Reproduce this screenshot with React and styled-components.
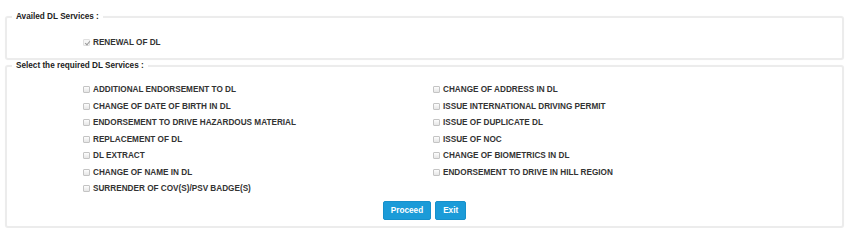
import React from "react";
import styled, { createGlobalStyle } from "styled-components";

const leftServices = [
  "ADDITIONAL ENDORSEMENT TO DL",
  "CHANGE OF DATE OF BIRTH IN DL",
  "ENDORSEMENT TO DRIVE HAZARDOUS MATERIAL",
  "REPLACEMENT OF DL",
  "DL EXTRACT",
  "CHANGE OF NAME IN DL",
  "SURRENDER OF COV(S)/PSV BADGE(S)",
];

const rightServices = [
  "CHANGE OF ADDRESS IN DL",
  "ISSUE INTERNATIONAL DRIVING PERMIT",
  "ISSUE OF DUPLICATE DL",
  "ISSUE OF NOC",
  "CHANGE OF BIOMETRICS IN DL",
  "ENDORSEMENT TO DRIVE IN HILL REGION",
];

export default function App() {
  return (
    <>
      <GlobalStyle />
      <StyledPage>
        <StyledFieldset $top={11}>
          <StyledLegend>Availed DL Services :</StyledLegend>
          <StyledAvailed>
            <ServiceItem label="RENEWAL OF DL" checked disabled />
          </StyledAvailed>
        </StyledFieldset>
        <StyledFieldset $top={0}>
          <StyledLegend>Select the required DL Services :</StyledLegend>
          <StyledGrid>
            <StyledColumn>
              {leftServices.map((service) => (
                <ServiceItem key={service} label={service} />
              ))}
            </StyledColumn>
            <StyledColumn>
              {rightServices.map((service) => (
                <ServiceItem key={service} label={service} />
              ))}
            </StyledColumn>
          </StyledGrid>
          <StyledActions>
            <StyledButton type="button">Proceed</StyledButton>
            <StyledButton type="button">Exit</StyledButton>
          </StyledActions>
        </StyledFieldset>
      </StyledPage>
    </>
  );
}

function ServiceItem({ label, checked, disabled }) {
  return (
    <StyledItem>
      <StyledCheckbox
        type="checkbox"
        defaultChecked={checked}
        disabled={disabled}
      />
      <span>{label}</span>
    </StyledItem>
  );
}

const GlobalStyle = createGlobalStyle`
  body {
    margin: 0;
    background: #fff;
    font-family: "Liberation Sans", Arial, sans-serif;
    color: #333;
  }
`;

const StyledPage = styled.div`
  padding: 0 6px 0 5px;
`;

const StyledFieldset = styled.fieldset`
  margin: ${(props) => props.$top}px 0 0;
  padding: 0;
  border: 2px solid #ececec;
  border-radius: 3px;
  box-shadow: 0 0 1px rgba(0, 0, 0, 0.06);
  min-width: 0;
`;

const StyledLegend = styled.legend`
  margin-left: 5px;
  padding: 0 4px;
  font-size: 8.2px;
  font-weight: bold;
  line-height: 12px;
  color: #222;
`;

const StyledAvailed = styled.div`
  padding: 11px 0 7px 76px;
`;

const StyledGrid = styled.div`
  display: grid;
  grid-template-columns: 350px 1fr;
  padding: 10px 0 0 76px;
`;

const StyledColumn = styled.div`
  display: flex;
  flex-direction: column;
`;

const StyledItem = styled.label`
  display: flex;
  align-items: center;
  gap: 3px;
  height: 16.5px;
  font-size: 8.2px;
  font-weight: bold;
  color: #333;
`;

const StyledCheckbox = styled.input`
  appearance: none;
  margin: 0;
  width: 7px;
  height: 7px;
  border: 1px solid #c4c4c4;
  border-radius: 1px;
  background: linear-gradient(#fdfdfd, #e6e6e6);
  position: relative;
  flex-shrink: 0;

  &:checked::after {
    content: "";
    position: absolute;
    left: 1.5px;
    top: 0;
    width: 2px;
    height: 4px;
    border: solid #9a9a9a;
    border-width: 0 1px 1px 0;
    transform: rotate(40deg);
  }

  &:disabled {
    border-color: #e0e0e0;
    background: #f6f6f6;
  }
`;

const StyledActions = styled.div`
  display: flex;
  justify-content: center;
  gap: 4px;
  padding: 4px 0 6px;
`;

const StyledButton = styled.button`
  height: 19px;
  padding: 0 7px;
  border: 1px solid #1690cb;
  border-radius: 2px;
  background: #1b9bd8;
  color: #fff;
  font-family: "Liberation Sans", Arial, sans-serif;
  font-size: 8.2px;
  font-weight: bold;
  cursor: pointer;
`;
